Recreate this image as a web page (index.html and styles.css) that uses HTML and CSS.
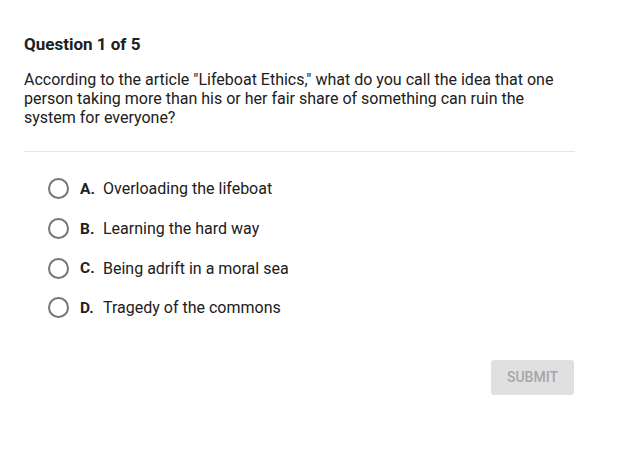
FILE: index.html
```html
<!DOCTYPE html>
<html lang="en">
<head>
    <meta charset="UTF-8">
    <title>Question 1 of 5</title>
    <link rel="stylesheet" href="styles.css">
</head>
<body>
    <div class="quiz">
        <h1 class="quiz-title">Question 1 of 5</h1>
        <p class="quiz-question">According to the article "Lifeboat Ethics," what do you call the idea that one person taking more than his or her fair share of something can ruin the system for everyone?</p>

        <ul class="choices">
            <li class="choice"><span class="radio"></span><span class="letter">A.</span>Overloading the lifeboat</li>
            <li class="choice"><span class="radio"></span><span class="letter">B.</span>Learning the hard way</li>
            <li class="choice"><span class="radio"></span><span class="letter">C.</span>Being adrift in a moral sea</li>
            <li class="choice"><span class="radio"></span><span class="letter">D.</span>Tragedy of the commons</li>
        </ul>

        <div class="actions">
            <button class="submit" disabled>SUBMIT</button>
        </div>
    </div>
</body>
</html>
```

FILE: styles.css
```css
body {
    margin: 0;
    background: #fff;
    font-family: Roboto, "Liberation Sans", sans-serif;
    color: #202020;
}
.quiz {
    width: 551px;
    padding: 34px 0 0 24px;
}
.quiz-title {
    margin: 0;
    font-size: 17px;
    font-weight: 700;
    line-height: 20px;
}
.quiz-question {
    margin: 16px 0 0;
    font-size: 16px;
    line-height: 19px;
    padding-bottom: 24px;
    border-bottom: 1px solid #e6e6e6;
}
.choices {
    list-style: none;
    margin: 0;
    padding: 17px 0 0 24px;
}
.choice {
    display: flex;
    align-items: center;
    height: 39.7px;
    font-size: 16px;
}
.radio {
    flex: none;
    width: 17px;
    height: 17px;
    border: 2px solid #757575;
    border-radius: 50%;
    margin-right: 11px;
}
.letter {
    font-weight: 700;
    font-size: 15.5px;
    width: 23px;
}
.actions {
    display: flex;
    justify-content: flex-end;
    margin-top: 32px;
}
.submit {
    width: 83px;
    height: 35px;
    margin-right: 1px;
    border: none;
    border-radius: 3px;
    background: #e0e0e0;
    color: #a6a6a6;
    font-family: Roboto, "Liberation Sans", sans-serif;
    font-size: 14px;
    font-weight: 500;
}
```
